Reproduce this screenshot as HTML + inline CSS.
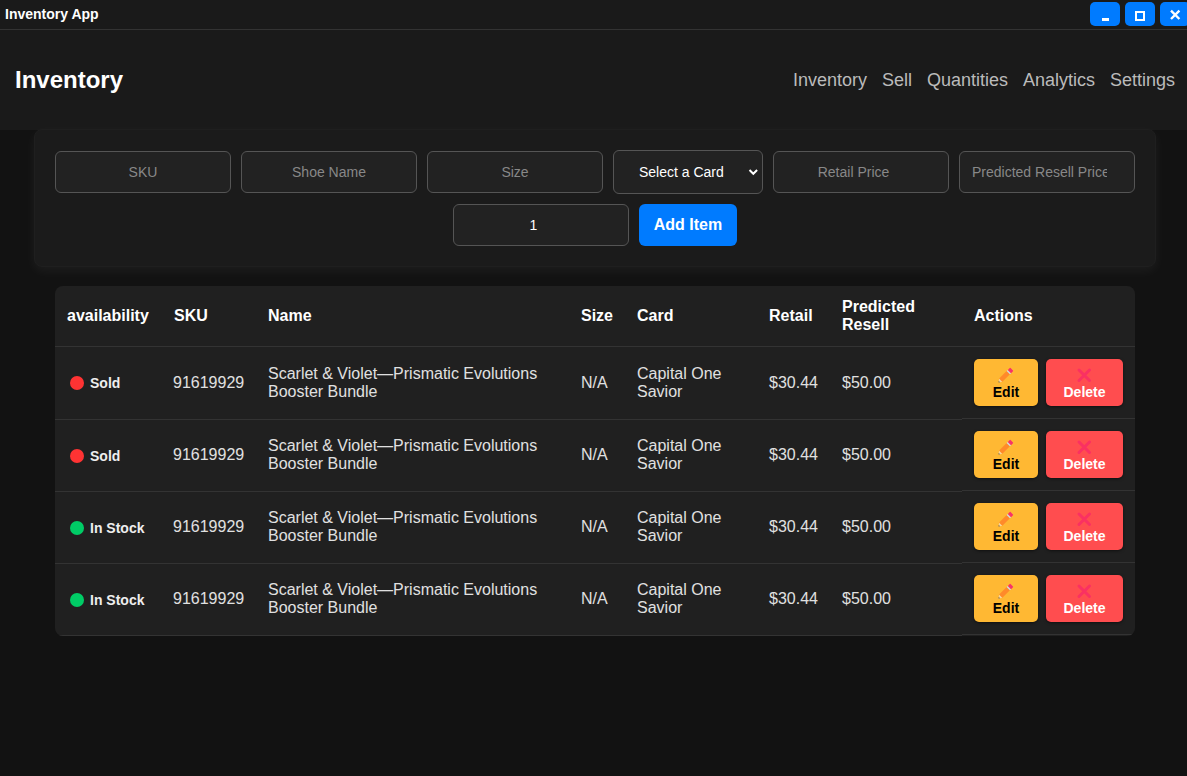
<!DOCTYPE html>
<html><head><meta charset="utf-8">
<style>
*{box-sizing:border-box;margin:0;padding:0}
html,body{width:1187px;height:776px;overflow:hidden;background:#121212;font-family:"Liberation Sans",sans-serif;color:#e0e0e0}
.abs{position:absolute}
#tb{left:0;top:0;width:1187px;height:30px;background:#1a1a1a;border-bottom:1px solid #333}
#tb .t{left:5px;top:6px;font-size:14px;font-weight:bold;color:#fff;line-height:16px}
.wb{top:2px;width:30px;height:24px;background:#007bff;border-radius:5px;color:#fff}
#hd{left:0;top:30px;width:1187px;height:100px;background:#1a1a1a}
#hd h1{position:absolute;left:15px;top:36px;font-size:24px;font-weight:bold;color:#fff;line-height:28px}
.nav{top:40px;font-size:18px;color:#bbb;line-height:21px}
#ct{left:34px;top:129px;width:1122px;height:138px;background:#1b1b1b;border:1px solid #1f1f1f;border-radius:8px;box-shadow:0 4px 12px rgba(255,255,255,0.05)}
.in{height:42px;top:151px;width:176px;background:#222;border:1px solid #555;border-radius:6px;font-size:14px;color:#888;line-height:40px;text-align:center;white-space:nowrap;overflow:hidden}
#tbl{left:55px;top:286px;width:1080px;height:350px;background:#202020;border-radius:8px;overflow:hidden}
.hl{left:0;height:1px;background:#333}
.th{font-size:16px;font-weight:bold;color:#fff;line-height:18px}
.td{font-size:16px;color:#e0e0e0;line-height:18px}
.dot{width:14px;height:14px;border-radius:50%}
.st{font-size:14px;font-weight:bold;color:#eee;line-height:16px}
.bt{left:0;right:0;top:25px;line-height:16px}
.btn{width:64px;height:47px;border-radius:5px;font-size:14px;font-weight:bold;text-align:center;box-shadow:0 1px 3px rgba(0,0,0,0.5)}
</style></head><body>
<div id="tb" class="abs">
  <div class="abs t">Inventory App</div>
  <div class="abs wb" style="left:1090px"><div class="abs" style="left:11.5px;top:16px;width:7.5px;height:2.8px;background:#fff"></div></div>
  <div class="abs wb" style="left:1125px"><div class="abs" style="left:10px;top:9.3px;width:10.4px;height:9.4px;border:2px solid #fff"></div></div>
  <div class="abs wb" style="left:1160px"><svg class="abs" style="left:0;top:0" width="30" height="24" viewBox="0 0 30 24"><path d="M11 8.7 L19.4 17 M19.4 8.7 L11 17" stroke="#fff" stroke-width="2.4"/></svg></div>
</div>
<div id="hd" class="abs">
  <h1>Inventory</h1>
  <div class="abs nav" style="left:793px">Inventory</div>
  <div class="abs nav" style="left:882px">Sell</div>
  <div class="abs nav" style="left:927px">Quantities</div>
  <div class="abs nav" style="left:1023px">Analytics</div>
  <div class="abs nav" style="left:1110px">Settings</div>
</div>
<div id="ct" class="abs"></div>
<div class="abs in" style="left:55px">SKU</div>
<div class="abs in" style="left:241px">Shoe Name</div>
<div class="abs in" style="left:427px">Size</div>
<div class="abs in" style="left:613px;top:150px;height:44px;width:150px;color:#fff;line-height:42px;text-align:left;padding-left:25px">Select a Card<svg class="abs" style="left:134px;top:17px" width="11" height="8" viewBox="0 0 11 8"><path d="M1.5 2 L5.3 5.8 L9.1 2" stroke="#fff" stroke-width="2" fill="none"/></svg></div>
<div class="abs in" style="left:773px;padding-right:15px">Retail Price</div>
<div class="abs in" style="left:959px;text-align:left"><div class="abs" style="left:12px;top:0;width:135px;overflow:hidden">Predicted Resell Price</div></div>
<div class="abs in" style="left:453px;top:204px;color:#fff;padding-right:15px">1</div>
<div class="abs" style="left:639px;top:204px;width:98px;height:42px;background:#007bff;border-radius:6px;color:#fff;font-weight:bold;font-size:16px;line-height:42px;text-align:center">Add Item</div>

<div id="tbl" class="abs">
<div class="abs hl" style="top:60px;width:1080px"></div>
<div class="abs hl" style="top:133px;width:907px"></div>
<div class="abs hl" style="top:132px;left:907px;width:173px"></div>
<div class="abs hl" style="top:205px;width:907px"></div>
<div class="abs hl" style="top:204px;left:907px;width:173px"></div>
<div class="abs hl" style="top:277px;width:907px"></div>
<div class="abs hl" style="top:276px;left:907px;width:173px"></div>
<div class="abs hl" style="top:349px;width:907px"></div>
<div class="abs hl" style="top:348px;left:907px;width:173px"></div>
</div>
<div class="abs th" style="left:67px;top:307px">availability</div>
<div class="abs th" style="left:174px;top:307px">SKU</div>
<div class="abs th" style="left:268px;top:307px">Name</div>
<div class="abs th" style="left:581px;top:307px">Size</div>
<div class="abs th" style="left:637px;top:307px">Card</div>
<div class="abs th" style="left:769px;top:307px">Retail</div>
<div class="abs th" style="left:974px;top:307px">Actions</div>
<div class="abs th" style="left:842px;top:298px">Predicted<br>Resell</div>
<div class="abs dot" style="left:70px;top:376px;background:#ff3333"></div>
<div class="abs st" style="left:90px;top:375px">Sold</div>
<div class="abs td" style="left:173px;top:374px">91619929</div>
<div class="abs td" style="left:581px;top:374px">N/A</div>
<div class="abs td" style="left:769px;top:374px">$30.44</div>
<div class="abs td" style="left:842px;top:374px">$50.00</div>
<div class="abs td" style="left:268px;top:365px">Scarlet &amp; Violet—Prismatic Evolutions<br>Booster Bundle</div>
<div class="abs td" style="left:637px;top:365px">Capital One<br>Savior</div>
<div class="abs btn" style="left:974px;top:359px;background:#ffb833;color:#000"><svg class="abs" style="left:22.8px;top:8.5px;overflow:visible" width="16" height="16" viewBox="0 0 16 16"><g transform="rotate(-45 8 8)"><path d="M-1.1 8 L2 5.7 L2 10.3 Z" fill="#f9d49a"/><path d="M-1.1 8 L0 7.2 L0 8.8 Z" fill="#3a3a3a"/><rect x="2" y="5.7" width="10.6" height="4.6" fill="#ff8a2a"/><rect x="12.6" y="5.7" width="1.7" height="4.6" fill="#cfd8dc"/><path d="M14.3 5.7 H17 Q17.6 5.7 17.6 6.3 V9.7 Q17.6 10.3 17 10.3 H14.3 Z" fill="#f7336a"/></g></svg><div class="abs bt">Edit</div></div>
<div class="abs btn" style="left:1046px;top:359px;width:77px;background:#ff4d4f;color:#fff"><svg class="abs" style="left:31px;top:9px;overflow:visible" width="14" height="14" viewBox="0 0 14 14"><path d="M2 2 L12.5 12.5 M12.5 2 L2 12.5" stroke="#fa3162" stroke-width="3" stroke-linecap="round"/></svg><div class="abs bt">Delete</div></div>
<div class="abs dot" style="left:70px;top:449px;background:#ff3333"></div>
<div class="abs st" style="left:90px;top:448px">Sold</div>
<div class="abs td" style="left:173px;top:446px">91619929</div>
<div class="abs td" style="left:581px;top:446px">N/A</div>
<div class="abs td" style="left:769px;top:446px">$30.44</div>
<div class="abs td" style="left:842px;top:446px">$50.00</div>
<div class="abs td" style="left:268px;top:437px">Scarlet &amp; Violet—Prismatic Evolutions<br>Booster Bundle</div>
<div class="abs td" style="left:637px;top:437px">Capital One<br>Savior</div>
<div class="abs btn" style="left:974px;top:431px;background:#ffb833;color:#000"><svg class="abs" style="left:22.8px;top:8.5px;overflow:visible" width="16" height="16" viewBox="0 0 16 16"><g transform="rotate(-45 8 8)"><path d="M-1.1 8 L2 5.7 L2 10.3 Z" fill="#f9d49a"/><path d="M-1.1 8 L0 7.2 L0 8.8 Z" fill="#3a3a3a"/><rect x="2" y="5.7" width="10.6" height="4.6" fill="#ff8a2a"/><rect x="12.6" y="5.7" width="1.7" height="4.6" fill="#cfd8dc"/><path d="M14.3 5.7 H17 Q17.6 5.7 17.6 6.3 V9.7 Q17.6 10.3 17 10.3 H14.3 Z" fill="#f7336a"/></g></svg><div class="abs bt">Edit</div></div>
<div class="abs btn" style="left:1046px;top:431px;width:77px;background:#ff4d4f;color:#fff"><svg class="abs" style="left:31px;top:9px;overflow:visible" width="14" height="14" viewBox="0 0 14 14"><path d="M2 2 L12.5 12.5 M12.5 2 L2 12.5" stroke="#fa3162" stroke-width="3" stroke-linecap="round"/></svg><div class="abs bt">Delete</div></div>
<div class="abs dot" style="left:70px;top:521px;background:#00cc66"></div>
<div class="abs st" style="left:90px;top:520px">In Stock</div>
<div class="abs td" style="left:173px;top:518px">91619929</div>
<div class="abs td" style="left:581px;top:518px">N/A</div>
<div class="abs td" style="left:769px;top:518px">$30.44</div>
<div class="abs td" style="left:842px;top:518px">$50.00</div>
<div class="abs td" style="left:268px;top:509px">Scarlet &amp; Violet—Prismatic Evolutions<br>Booster Bundle</div>
<div class="abs td" style="left:637px;top:509px">Capital One<br>Savior</div>
<div class="abs btn" style="left:974px;top:503px;background:#ffb833;color:#000"><svg class="abs" style="left:22.8px;top:8.5px;overflow:visible" width="16" height="16" viewBox="0 0 16 16"><g transform="rotate(-45 8 8)"><path d="M-1.1 8 L2 5.7 L2 10.3 Z" fill="#f9d49a"/><path d="M-1.1 8 L0 7.2 L0 8.8 Z" fill="#3a3a3a"/><rect x="2" y="5.7" width="10.6" height="4.6" fill="#ff8a2a"/><rect x="12.6" y="5.7" width="1.7" height="4.6" fill="#cfd8dc"/><path d="M14.3 5.7 H17 Q17.6 5.7 17.6 6.3 V9.7 Q17.6 10.3 17 10.3 H14.3 Z" fill="#f7336a"/></g></svg><div class="abs bt">Edit</div></div>
<div class="abs btn" style="left:1046px;top:503px;width:77px;background:#ff4d4f;color:#fff"><svg class="abs" style="left:31px;top:9px;overflow:visible" width="14" height="14" viewBox="0 0 14 14"><path d="M2 2 L12.5 12.5 M12.5 2 L2 12.5" stroke="#fa3162" stroke-width="3" stroke-linecap="round"/></svg><div class="abs bt">Delete</div></div>
<div class="abs dot" style="left:70px;top:593px;background:#00cc66"></div>
<div class="abs st" style="left:90px;top:592px">In Stock</div>
<div class="abs td" style="left:173px;top:590px">91619929</div>
<div class="abs td" style="left:581px;top:590px">N/A</div>
<div class="abs td" style="left:769px;top:590px">$30.44</div>
<div class="abs td" style="left:842px;top:590px">$50.00</div>
<div class="abs td" style="left:268px;top:581px">Scarlet &amp; Violet—Prismatic Evolutions<br>Booster Bundle</div>
<div class="abs td" style="left:637px;top:581px">Capital One<br>Savior</div>
<div class="abs btn" style="left:974px;top:575px;background:#ffb833;color:#000"><svg class="abs" style="left:22.8px;top:8.5px;overflow:visible" width="16" height="16" viewBox="0 0 16 16"><g transform="rotate(-45 8 8)"><path d="M-1.1 8 L2 5.7 L2 10.3 Z" fill="#f9d49a"/><path d="M-1.1 8 L0 7.2 L0 8.8 Z" fill="#3a3a3a"/><rect x="2" y="5.7" width="10.6" height="4.6" fill="#ff8a2a"/><rect x="12.6" y="5.7" width="1.7" height="4.6" fill="#cfd8dc"/><path d="M14.3 5.7 H17 Q17.6 5.7 17.6 6.3 V9.7 Q17.6 10.3 17 10.3 H14.3 Z" fill="#f7336a"/></g></svg><div class="abs bt">Edit</div></div>
<div class="abs btn" style="left:1046px;top:575px;width:77px;background:#ff4d4f;color:#fff"><svg class="abs" style="left:31px;top:9px;overflow:visible" width="14" height="14" viewBox="0 0 14 14"><path d="M2 2 L12.5 12.5 M12.5 2 L2 12.5" stroke="#fa3162" stroke-width="3" stroke-linecap="round"/></svg><div class="abs bt">Delete</div></div>
</body></html>
